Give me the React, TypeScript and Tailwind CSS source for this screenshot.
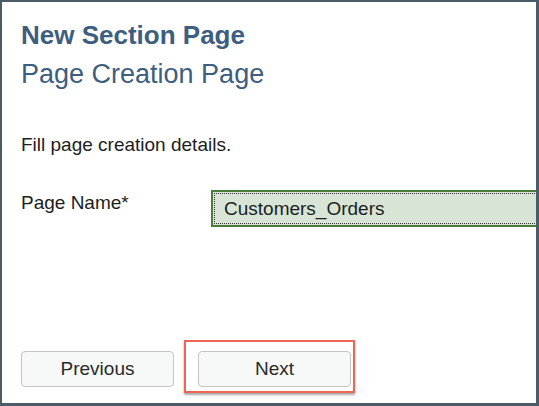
import React from 'react';

const App: React.FC = () => {
    return (
        <div className="w-[539px] h-[406px] bg-white border-t-2 border-l-2 border-r-[3px] border-b-[3px] border-[#4b5c68] flex flex-col pl-[19px] overflow-hidden" style={{ fontFamily: '"Liberation Sans", Arial, sans-serif' }}>
            {/* Header */}
            <div className="pt-[18px] text-[#3d5e7e]">
                <h1 className="text-[26px] leading-[30px] font-bold">New Section Page</h1>
                <h2 className="text-[27px] leading-[30px] mt-[9px]">Page Creation Page</h2>
            </div>

            <p className="mt-[45px] text-[19px] leading-[22px] text-[#1d1d1d]">Fill page creation details.</p>

            {/* Form row */}
            <div className="flex items-start mt-[34px]">
                <label className="w-[190px] pt-[2px] text-[19px] leading-[22px] text-[#1d1d1d]">Page Name*</label>
                <div className="flex-1 h-[37px] border-2 border-r-0 border-[#4a7d3a] bg-[#d8e5d6] p-px">
                    <div className="h-full border border-r-0 border-dotted border-[#333] flex items-center pl-[9px] text-[19px] leading-[22px] text-[#1d1d1d]">
                        Customers_Orders
                    </div>
                </div>
            </div>

            {/* Buttons */}
            <div className="mt-auto mb-[10px] flex items-end">
                <button className="mb-[6px] w-[153px] h-[36px] rounded-[4px] border border-[#c4c4c4] bg-[#f7f8f8] text-[19px] text-[#2a2a2a]">Previous</button>
                <div className="ml-[10px] border-2 border-[#ec6656] shadow-[0_2px_2px_rgba(0,0,0,0.35)] pt-[9px] pb-[4px] pl-[12px] pr-[2px]">
                    <button className="block w-[153px] h-[36px] rounded-[4px] border border-[#c4c4c4] bg-[#f7f8f8] text-[19px] text-[#2a2a2a]">Next</button>
                </div>
            </div>
        </div>
    );
};

export default App;
